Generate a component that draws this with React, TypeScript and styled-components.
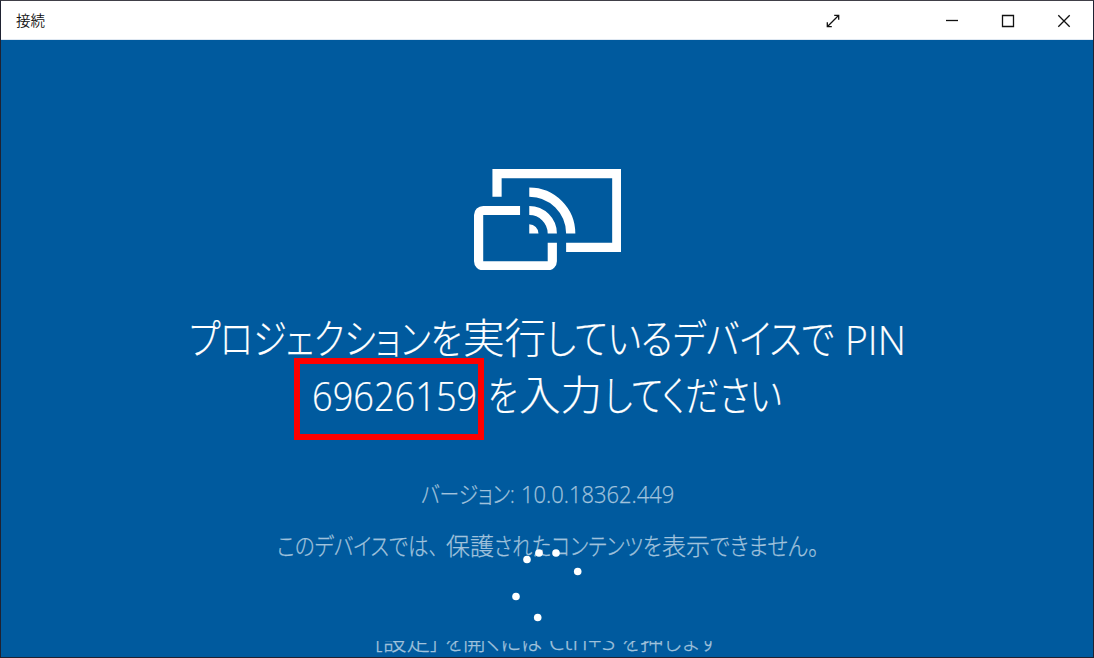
import React, { useLayoutEffect, useRef, useState } from "react";
import styled, { createGlobalStyle } from "styled-components";

const BLUE = "#005a9e";

const GlobalStyle = createGlobalStyle`
  * { box-sizing: border-box; }
  html, body { margin: 0; padding: 0; overflow: hidden; background: ${BLUE}; }
`;

const Window = styled.div`
  width: 1094px;
  height: 658px;
  display: flex;
  flex-direction: column;
  border: 1px solid #1f2231;
  border-top-color: #403f47;
  background: ${BLUE};
  overflow: hidden;
  font-family: "Open Sans", "Noto Sans CJK JP", sans-serif;
`;

const TitleBar = styled.header`
  height: 39px;
  flex: none;
  display: flex;
  align-items: center;
  background: #fff;
  border-bottom: 1px solid #dfe8f2;
  padding-left: 15px;
  color: #111;
`;

const Title = styled.span`
  flex: 1;
  font: 14.5px/20px "Noto Sans CJK JP", sans-serif;
  font-weight: 350;
`;

const CaptionButton = styled.button<{ $gap?: number }>`
  width: 56px;
  height: 38px;
  padding: 1px 2px 0 0;
  margin-right: ${(p) => p.$gap ?? 0}px;
  border: 0;
  background: none;
  display: flex;
  align-items: center;
  justify-content: center;
  color: #111;
`;

const Glyph = styled.svg`
  width: 14px;
  height: 14px;
  fill: none;
  stroke: currentColor;
  stroke-width: 1.3;
`;

const Stage = styled.main`
  position: relative;
  flex: 1;
  display: flex;
  flex-direction: column;
  align-items: flex-start;
`;

const CastIcon = styled.svg`
  width: 147.4px;
  height: 101.4px;
  margin: 128.5px 0 0 473px;
  flex: none;
`;

const Line = styled.div<{ $top: number; $left: number; $size: number; $height: number; $muted?: boolean }>`
  display: flex;
  flex: none;
  height: ${(p) => p.$height}px;
  line-height: ${(p) => p.$height}px;
  margin-top: ${(p) => p.$top}px;
  margin-left: ${(p) => p.$left}px;
  font-size: ${(p) => p.$size}px;
  font-weight: 300;
  white-space: pre;
  color: ${(p) => (p.$muted ? "#a0c2dc" : "#fff")};
  -webkit-text-stroke: ${(p) => (p.$muted ? "0.25px #a0c2dc" : "0.2px #fff")};
`;

const RunBox = styled.span<{ $width: number; $gap: number; $lift: number }>`
  display: block;
  flex: none;
  width: ${(p) => p.$width}px;
  margin-right: ${(p) => p.$gap}px;
  margin-top: ${(p) => -p.$lift}px;
`;

const RunText = styled.span`
  display: inline-block;
  transform-origin: 0 50%;
  font-feature-settings: "palt";
`;

const Clip = styled.div`
  margin-top: 79px;
  height: 13px;
  flex: none;
  overflow: hidden;
`;

const PinFrame = styled.div`
  position: absolute;
  left: 293px;
  top: 318px;
  width: 190px;
  height: 82px;
  border: 6px solid #f00;
`;

const Spinner = styled.svg`
  position: absolute;
  left: 499px;
  top: 500px;
  width: 96px;
  height: 96px;
  fill: #fff;
`;

/* Condenses or widens a piece of text so that it fills its column exactly. */
function Run({ text, width, gap = 0, lift = 0 }: { text: string; width: number; gap?: number; lift?: number }) {
  const ref = useRef<HTMLSpanElement>(null);
  const [scale, setScale] = useState(1);
  useLayoutEffect(() => {
    if (ref.current) setScale(width / ref.current.offsetWidth);
  }, [width, text]);
  return (
    <RunBox $width={width} $gap={gap} $lift={lift}>
      <RunText ref={ref} style={{ transform: `scaleX(${scale})` }}>{text}</RunText>
    </RunBox>
  );
}

const dots = [
  [527, 559.5], [539, 553], [556, 553], [577.7, 571.5], [516, 596.5], [537.7, 617.5],
];

export default function App() {
  return (
    <>
      <GlobalStyle />
      <Window>
        <TitleBar>
          <Title>接続</Title>
          <CaptionButton $gap={63} aria-label="全画面">
            <Glyph viewBox="0 0 14 14"><path d="M1.5 12.5l11-11M8.2 1.3h4.5v4.5M1.3 8.2v4.5h4.5" /></Glyph>
          </CaptionButton>
          <CaptionButton aria-label="最小化">
            <Glyph viewBox="0 0 14 14"><path d="M1 6.5h12" /></Glyph>
          </CaptionButton>
          <CaptionButton aria-label="最大化">
            <Glyph viewBox="0 0 14 14"><path d="M1.5 1.5h11v11h-11z" /></Glyph>
          </CaptionButton>
          <CaptionButton aria-label="閉じる">
            <Glyph viewBox="0 0 14 14"><path d="M1.3 1.3l11.4 11.4M12.7 1.3L1.3 12.7" /></Glyph>
          </CaptionButton>
        </TitleBar>
        <Stage>
          <CastIcon viewBox="0 0 16 11" fill="none" stroke="#fff">
            <path d="M2.5 3V.5h13v8H10M5 4.5H1a.5.5 0 0 0-.5.5v5a.5.5 0 0 0 .5.5h7a.5.5 0 0 0 .5-.5V8" />
            <path d="M6 2.5A4.5 4.5 0 0 1 10.5 7M6 4.5A2.5 2.5 0 0 1 8.5 7" />
            <path d="M6 6a1 1 0 0 1 1 1H6z" fill="#fff" stroke="none" />
          </CastIcon>
          <Line $top={41.1} $left={188} $size={41} $height={56}>
            <Run text="プロジェクションを" width={273} gap={1} lift={1} />
            <Run text="実行" width={83} lift={2} />
            <Run text="しているデバイスで" width={288} gap={11} lift={1} />
            <Run text="PIN" width={61} />
          </Line>
          <Line $top={0} $left={311} $size={41} $height={56}>
            <Run text="69626159" width={165} gap={11} />
            <Run text="を" width={30} gap={1} />
            <Run text="入力" width={83} gap={2} lift={1} />
            <Run text="してください" width={178} />
          </Line>
          <Line $top={55} $left={420} $size={23.5} $height={32} $muted>
            <Run text="バージョン:" width={94} gap={6} />
            <Run text="10.0.18362.449" width={153} />
          </Line>
          <Line $top={20} $left={276} $size={23.5} $height={32} $muted>
            <Run text="このデバイスでは" width={152} />
            <Run text="、" width={9} gap={8} />
            <Run text="保護" width={48} />
            <Run text="されたコンテンツを" width={168} />
            <Run text="表示" width={48} />
            <Run text="できません" width={98} />
            <Run text="。" width={11} />
          </Line>
          <Clip>
            <Line $top={-16} $left={374} $size={23.5} $height={32} $muted>
              <Run text="[" width={8} lift={2} />
              <Run text="設定" width={47} />
              <Run text="]" width={8} gap={7} lift={2} />
              <Run text="を" width={18} />
              <Run text="開" width={23} />
              <Run text="くには" width={56} gap={7} />
              <Run text="Ctrl+S" width={66} gap={7} />
              <Run text="を" width={18} />
              <Run text="押" width={24} />
              <Run text="します" width={54} />
            </Line>
          </Clip>
          <PinFrame />
          <Spinner viewBox="500 540 96 96">
            {dots.map(([x, y]) => <circle key={`${x}-${y}`} cx={x} cy={y} r={3.8} />)}
          </Spinner>
        </Stage>
      </Window>
    </>
  );
}
